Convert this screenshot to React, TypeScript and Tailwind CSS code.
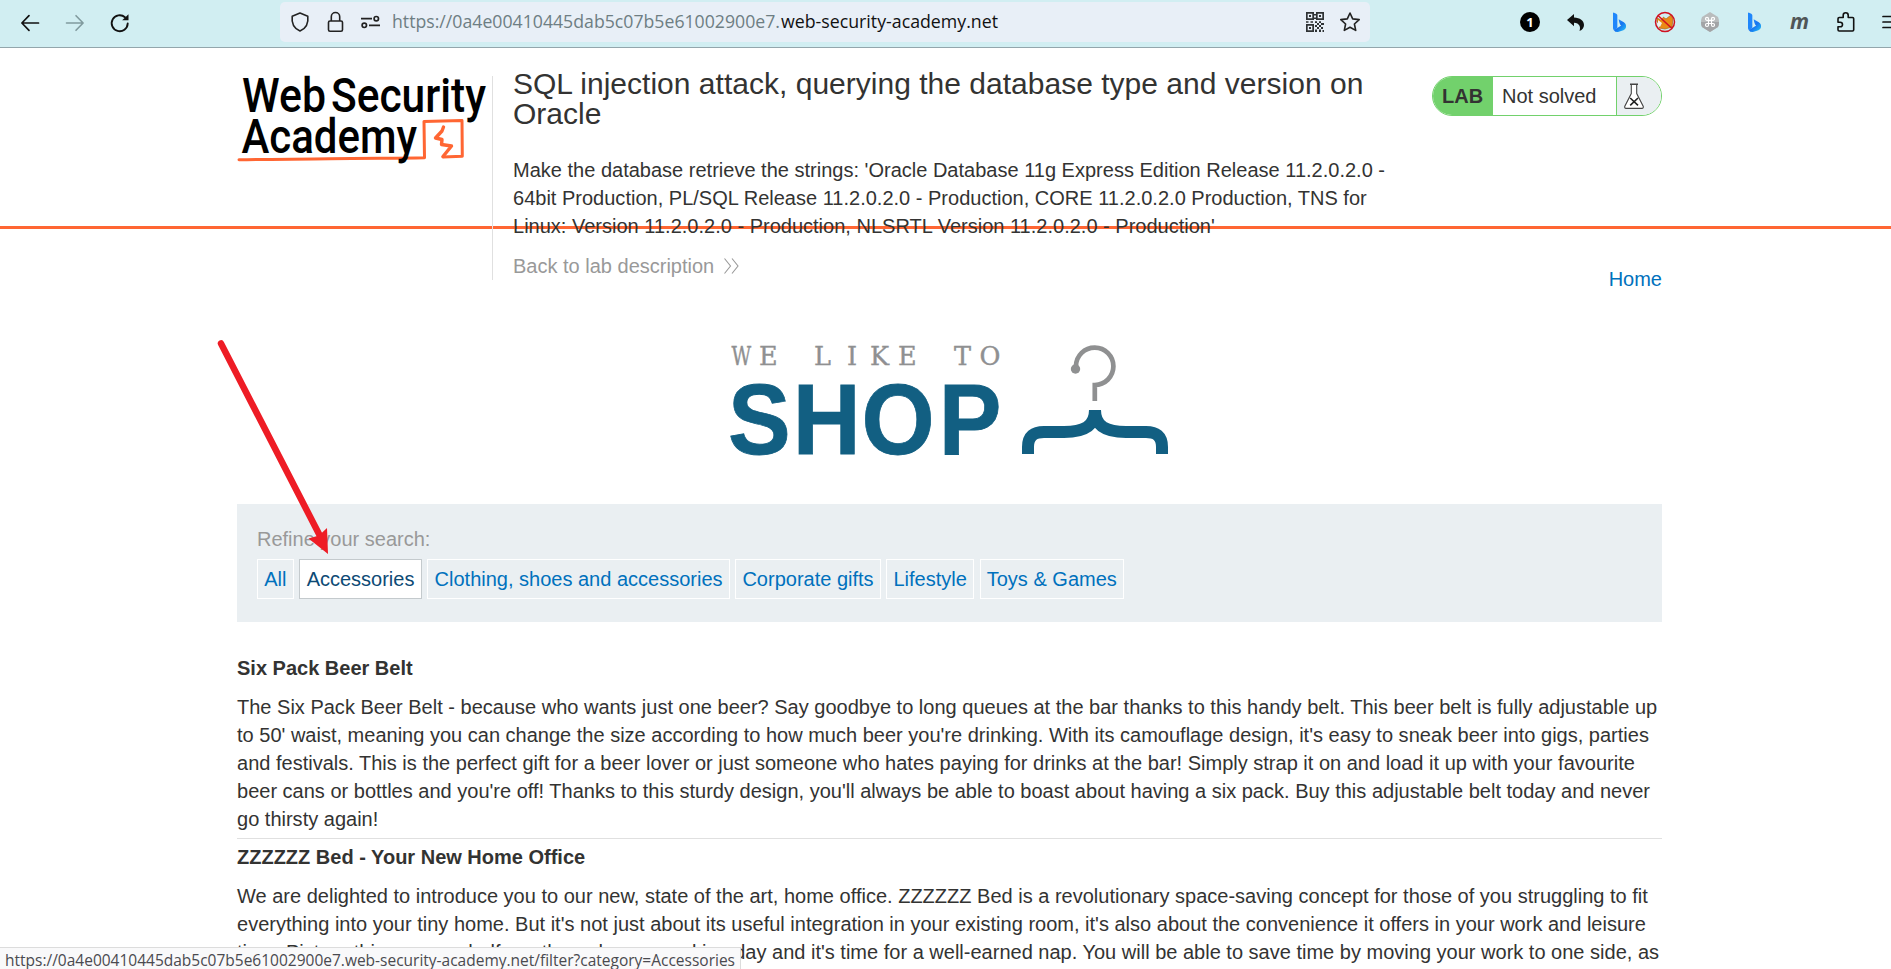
import React from "react";

const svgBase = "block shrink-0 overflow-visible";

function BingIcon() {
  return (
    <svg className={svgBase} width="13" height="20" viewBox="0 0 12 18">
      <defs>
        <linearGradient id="bg" x1="0" y1="0" x2="1" y2="1">
          <stop offset="0" stopColor="#2f9bff" />
          <stop offset="0.5" stopColor="#1673f0" />
          <stop offset="1" stopColor="#25c8f5" />
        </linearGradient>
      </defs>
      <path d="M0.5 0.2 L3 1.3 Q4 1.8 4 3 V14.6 L0.9 16.6 Q0 15.800 0 14.500 V0.600 Z" fill="#1f86fb" />
      <path d="M5.2 6.400 L10 9.200 Q12.400 10.800 12 13.800 Q11.600 15.600 9.600 16.500 L4.600 18.300 Q2 18.600 0.700 16.300 L4 14.600 L7.600 12.300 Q6 11.500 5.200 6.400 Z" fill="url(#bg)" />
    </svg>
  );
}

function BrowserBar() {
  return (
    <div className="flex h-12 shrink-0 border-b border-[#93a6ac] bg-[#d1eef2] text-black">
      <div className="flex w-[280px] items-start pl-[21px] pt-[14px]">
        <svg className={svgBase} width="18" height="18" viewBox="0 0 18 18" fill="none" stroke="#111" strokeWidth="1.7" strokeLinecap="round" strokeLinejoin="round">
          <path d="M17.500 9H1M8 1.700L0.900 9L8 16.300" />
        </svg>
        <svg className={svgBase + " ml-[27px]"} width="18" height="18" viewBox="0 0 18 18" fill="none" stroke="#809a9e" strokeWidth="1.600" strokeLinecap="round" strokeLinejoin="round">
          <path d="M0.500 9H17M10 1.700L17.100 9L10 16.300" />
        </svg>
        <svg className={svgBase + " ml-[27px]"} width="18" height="18" viewBox="0 0 18 18" fill="none" stroke="#111" strokeWidth="1.900" strokeLinecap="round">
          <path d="M14 3.200A8 8 0 1 0 16.700 9.500" />
          <path d="M17.500 0.300V6.300H11.200Z" fill="#111" stroke="none" />
        </svg>
      </div>
      <div className="mt-[2px] flex h-10 w-[1090px] items-center rounded-[5px] bg-[#e8eff7] pl-[11px] pr-[10px]">
        <svg className={svgBase} width="18" height="20" viewBox="0 0 18 20" fill="none" stroke="#222" strokeWidth="1.600" strokeLinejoin="round">
          <path d="M9 1L16.800 4.300C17.600 11 14.800 16.500 9 19C3.200 16.500 0.400 11 1.200 4.300Z" />
        </svg>
        <svg className={svgBase + " ml-[19px]"} width="15" height="20" viewBox="0 0 15 20" fill="none" stroke="#222" strokeWidth="1.600">
          <rect x="0.500" y="9" width="14" height="10.200" rx="1.500" />
          <path d="M3.300 9V4.700A4.200 4.200 0 0 1 11.700 4.700V9" />
        </svg>
        <svg className={svgBase + " ml-[18px]"} width="19" height="12" viewBox="0 0 19 12" fill="none" stroke="#222" strokeWidth="1.700">
          <path d="M0 2.700H11M8 9.300H19" />
          <circle cx="15.300" cy="2.700" r="2.200" />
          <circle cx="3.300" cy="9.300" r="2.200" />
        </svg>
        <svg className={svgBase + " ml-[12px]"} width="607" height="24" viewBox="0 0 607 24" fontFamily="'Open Sans','Noto Sans',sans-serif" fontSize="17.500">
          <text x="0" y="18" textLength="388" lengthAdjust="spacingAndGlyphs" fill="#6e7e83">https://0a4e00410445dab5c07b5e61002900e7.</text>
          <text x="389" y="18" textLength="217" lengthAdjust="spacingAndGlyphs" fill="#111">web-security-academy.net</text>
        </svg>
        <svg className={svgBase + " ml-auto"} width="18" height="20" viewBox="0 0 18 20" fill="#2f3335">
          <path fillRule="evenodd" d="M0 0H8V8H0ZM1.700 1.700V6.300H6.300V1.700ZM10 0H18V8H10ZM11.700 1.700V6.300H16.300V1.700ZM0 12H8V20H0ZM1.700 13.700V18.300H6.300V13.700Z" />
          <path d="M3 3H5V5H3ZM13 3H15V5H13ZM3 15H5V17H3ZM8 2H10V3.500H8ZM8 5.500H10V7H8ZM0 9.300H2.500V10.800H0ZM4.500 9.300H7V10.800H4.500ZM9 9.300H11V11H9ZM13 9.300H15V11H13ZM11 11H13V13H11ZM15 11H18V13H15ZM9 13H11V15H9ZM13 13H15V15H13ZM11 15H13V17H11ZM15 15H17V17H15ZM9 17.500H11V20H9ZM13 17.500H15V20H13ZM16.500 18H18V20H16.500Z" />
        </svg>
        <svg className={svgBase + " ml-[16px]"} width="20" height="20" viewBox="0 0 20 20" fill="none" stroke="#222" strokeWidth="1.600" strokeLinejoin="round">
          <path d="M10 1L12.700 6.900L19.200 7.600L14.400 12L15.700 18.400L10 15.200L4.300 18.400L5.600 12L0.800 7.600L7.300 6.900Z" />
        </svg>
      </div>
      <div className="flex h-11 min-w-0 flex-1 items-center overflow-hidden pl-[150px]">
        <div className="flex size-5 shrink-0 items-center justify-center rounded-full bg-black font-['Open_Sans',sans-serif] text-[13px] font-bold text-white">1</div>
        <svg className={svgBase + " ml-[27px]"} width="17" height="17" viewBox="0 0 17 17">
          <path d="M0 6L7 0V3.600C13 3.800 17 7 17 11C17 13.500 15.500 16 12.500 17C14 13 12.500 9 7 8.700V12.300Z" fill="#111" />
        </svg>
        <div className="ml-[29px]"><BingIcon /></div>
        <svg className={svgBase + " ml-[28px]"} width="22" height="22" viewBox="0 0 22 22">
          <path d="M3 7L7 9L9 6L12 8L17 4L19 8L18 16L11 18L5 17L7 13L3 11Z" fill="#ea8a16" stroke="#a9641d" strokeWidth="0.700" />
          <path d="M4 9L8 12L6 16L4 14ZM4 4L9 6L7 9Z" fill="#f5f0ea" />
          <circle cx="11" cy="11" r="9.500" fill="none" stroke="#d01020" strokeWidth="1.500" />
          <path d="M4 4.500L18 17.500" stroke="#d01020" strokeWidth="1.500" />
        </svg>
        <svg className={svgBase + " ml-[25px]"} width="18" height="20" viewBox="0 0 18 20">
          <path d="M9 0L17 5Q19 10 17 15L9 20L1 15Q-1 10 1 5Z" fill="#b9bcbd" />
          <path d="M0 10H18Q18 13 17 15L9 20L1 15Q0 13 0 10Z" fill="#a2a4a6" />
          <path d="M7.500 8.500V6.800A1.500 1.500 0 1 0 6 8.300H12A1.500 1.500 0 1 0 10.500 6.800V13A1.500 1.500 0 1 0 12 11.500H6A1.500 1.500 0 1 0 7.500 13Z" fill="none" stroke="#fff" strokeWidth="1.200" />
        </svg>
        <div className="ml-[29px]"><BingIcon /></div>
        <div className="ml-[29px] w-[20px] shrink-0 pb-[3px] font-['Open_Sans',sans-serif] text-[21px] font-bold italic leading-5 text-[#505657]">m</div>
        <svg className={svgBase + " ml-[27px]"} width="18" height="20" viewBox="0 0 18 20" fill="none" stroke="#111" strokeWidth="1.600" strokeLinejoin="round">
          <path d="M6.200 5.500V3.200A2.500 2.500 0 0 1 11.200 3.200V5.500H15.500Q16.700 5.500 16.700 6.700V17.800Q16.700 19 15.500 19H2.200Q1 19 1 17.800V14.800H3.200A2.300 2.300 0 0 0 3.200 10.200H1V6.700Q1 5.500 2.200 5.500Z" />
        </svg>
        <svg className={svgBase + " ml-[27px]"} width="18" height="14" viewBox="0 0 18 14" stroke="#111" strokeWidth="1.700" strokeLinecap="round">
          <path d="M1 1.500H17M1 7H17M1 12.500H17" />
        </svg>
      </div>
    </div>
  );
}

function AcademyLogo() {
  return (
    <svg className={svgBase} width="255" height="90" viewBox="237 76 255 90" fontFamily="Roboto, sans-serif" fontWeight="500" fontSize="48">
      <g fill="none" stroke="#ff6633" strokeLinecap="round" strokeLinejoin="round">
        <path d="M239 159.800C270 159 300 159.300 330 158.800C365 158 395 158.500 424.500 157.800L424 121.500L462 120.500L462.300 156.300L443 157" strokeWidth="3" />
        <path d="M443.500 127L442 131L435.500 138L442 139.500L441.500 144.500L451.500 146L443 156.500" strokeWidth="3.400" />
      </g>
      <text x="242" y="112" textLength="84" lengthAdjust="spacingAndGlyphs">Web</text>
      <text x="331" y="112" textLength="155" lengthAdjust="spacingAndGlyphs">Security</text>
      <text x="241.500" y="153" textLength="175.500" lengthAdjust="spacingAndGlyphs">Academy</text>
    </svg>
  );
}

function LabStatus() {
  return (
    <div className="ml-auto flex h-10 w-[230px] overflow-hidden rounded-[20px] border border-[#72d16c] bg-white leading-[38px]">
      <div className="w-[60px] bg-[#72d16c] pl-[9px] font-bold">LAB</div>
      <div className="w-[123px] pl-[9px]">Not solved</div>
      <div className="flex-1 border-l border-[#72d16c] bg-[#eaeff2] pl-[7px] pt-[6px]">
        <svg className={svgBase} width="20" height="26" viewBox="0 0 20 26" fill="#fff" stroke="#444" strokeWidth="1.100">
          <path d="M7.300 1V10.500L0.700 23.500Q0.500 25.300 2 25.400H18Q19.500 25.300 19.300 23.500L12.700 10.500V1" />
          <path d="M6 1.300H14" strokeWidth="1.500" />
          <path d="M6.200 15L14 22.300M14 15L6.200 22.300" strokeWidth="1.600" stroke="#222" />
        </svg>
      </div>
    </div>
  );
}

function ShopLogo() {
  return (
    <svg className={svgBase} width="450" height="125" viewBox="725 340 450 125">
      <g fontFamily="'DejaVu Serif', serif" fontSize="25.500" fill="#8f9091" stroke="#8f9091" strokeWidth="0.400">
        <text transform="scale(0.750 1)" x="975.500" y="365">W</text>
        <text y="365" x="759 814 847 870 898 954 979.500">ELIKETO</text>
      </g>
      <text transform="scale(0.940 1)" y="454" x="774.600 843.300 916.600 998.600" fontFamily="'Liberation Sans', Arial, sans-serif" fontWeight="700" fontSize="100" fill="#125f82" stroke="#125f82" strokeWidth="0.800">SHOP</text>
      <path d="M1076 368V366A18.700 18.700 0 1 1 1094.800 385V401" fill="none" stroke="#8f9091" strokeWidth="4.700" />
      <circle cx="1075.500" cy="369" r="4.700" fill="#8f9091" />
      <path d="M1028 454V447C1028 436 1034 432 1044 432H1064C1083 432 1095 427 1095 410C1095 427 1107 432 1126 432H1146C1156 432 1162 436 1162 447V454" fill="none" stroke="#125f82" strokeWidth="12" />
    </svg>
  );
}

const categories = [
  { name: "All" },
  { name: "Accessories", active: true },
  { name: "Clothing, shoes and accessories" },
  { name: "Corporate gifts" },
  { name: "Lifestyle" },
  { name: "Toys & Games" },
];

export default function App() {
  return (
    <div className="relative flex h-[969px] w-full flex-col overflow-hidden bg-white font-['Liberation_Sans',Arial,sans-serif] text-[20px] leading-7 text-[#333332]">
      <BrowserBar />
      <header className="h-[181px] shrink-0 border-b-3 border-[#ff6633] pt-7">
        <div className="ml-[237px] flex w-[1425px] items-start">
          <AcademyLogo />
          <div className="h-[204px] w-[894px] border-l border-[#e0e0e0] pl-5">
            <h2 className="-mt-[7px] text-[30px] leading-[30px] tracking-[0.015px]">
              SQL injection attack, querying the database type and version on<br />Oracle
            </h2>
            <p className="mt-[27px] whitespace-nowrap tracking-[0.007px]">
              Make the database retrieve the strings: 'Oracle Database 11g Express Edition Release 11.2.0.2.0 -<br />
              64bit Production, PL/SQL Release 11.2.0.2.0 - Production, CORE 11.2.0.2.0 Production, TNS for<br />
              Linux: Version 11.2.0.2.0 - Production, NLSRTL Version 11.2.0.2.0 - Production'
            </p>
            <a className="mt-3 flex items-center text-[#999999]">
              Back to lab description
              <svg className={svgBase + " ml-[10px]"} width="15" height="16" viewBox="0 0 15 16" fill="none" stroke="#999" strokeWidth="1.100">
                <path d="M0.500 0.500L6.500 8L0.500 15.500M8 0.500L14 8L8 15.500" />
              </svg>
            </a>
          </div>
          <LabStatus />
        </div>
      </header>
      <main className="ml-[237px] w-[1425px] shrink-0">
        <nav className="mt-[36px] flex justify-end text-[#0071bd]"><a>Home</a></nav>
        <div className="mt-[47px] pl-[488px]"><ShopLogo /></div>
        <section className="mt-[39px] h-[118px] bg-[#eaeff2] pl-5 pt-[21px]">
          <div className="text-[#999999]">Refine your search:</div>
          <div className="mt-[6px] flex gap-[5.400px] text-[#0071bd]">
            {categories.map((c) => (
              <a
                key={c.name}
                className={
                  c.active
                    ? "h-10 border border-[#c4cacd] bg-white px-[6.500px] leading-[38px] text-[#0d4a75]"
                    : "h-10 border border-white px-[6.250px] leading-[38px]"
                }
              >
                {c.name}
              </a>
            ))}
          </div>
        </section>
        <section>
          <h3 className="mt-8 font-bold">Six Pack Beer Belt</h3>
          <p className="mt-[11px] whitespace-nowrap tracking-[0.005px]">
            The Six Pack Beer Belt - because who wants just one beer? Say goodbye to long queues at the bar thanks to this handy belt. This beer belt is fully adjustable up<br />
            to 50' waist, meaning you can change the size according to how much beer you're drinking. With its camouflage design, it's easy to sneak beer into gigs, parties<br />
            and festivals. This is the perfect gift for a beer lover or just someone who hates paying for drinks at the bar! Simply strap it on and load it up with your favourite<br />
            beer cans or bottles and you're off! Thanks to this sturdy design, you'll always be able to boast about having a six pack. Buy this adjustable belt today and never<br />
            go thirsty again!
          </p>
          <hr className="mt-[5px] border-[#e0e0e0]" />
          <h3 className="mt-1 font-bold">ZZZZZZ Bed - Your New Home Office</h3>
          <p className="mt-[11px] whitespace-nowrap tracking-[0.005px]">
            We are delighted to introduce you to our new, state of the art, home office. ZZZZZZ Bed is a revolutionary space-saving concept for those of you struggling to fit<br />
            everything into your tiny home. But it's not just about its useful integration in your existing room, it's also about the convenience it offers in your work and leisure<br />
            time. Picture this, you are halfway through your working day and it's time for a well-earned nap. You will be able to save time by moving your work to one side, as
          </p>
        </section>
      </main>

      <svg className="absolute left-[210px] top-[330px]" width="130" height="230" viewBox="210 330 130 230">
        <path d="M221 343.500L319.500 535" stroke="#ee1c25" strokeWidth="6.500" strokeLinecap="round" />
        <path d="M328 554L308.500 538.500L319 535.500L327 528Z" fill="#ee1c25" />
      </svg>

      <div className="absolute bottom-0 left-0 h-[22px] w-[741px] border-r border-t border-[#dcdcdc] bg-[#f9f9fa]">
        <svg className={svgBase} width="741" height="22" viewBox="0 0 741 22" fontFamily="'Open Sans','Noto Sans',sans-serif" fontSize="15.500">
          <text x="5" y="17.500" textLength="730" lengthAdjust="spacingAndGlyphs" fill="#4a4a4f">https://0a4e00410445dab5c07b5e61002900e7.web-security-academy.net/filter?category=Accessories</text>
        </svg>
      </div>
    </div>
  );
}
